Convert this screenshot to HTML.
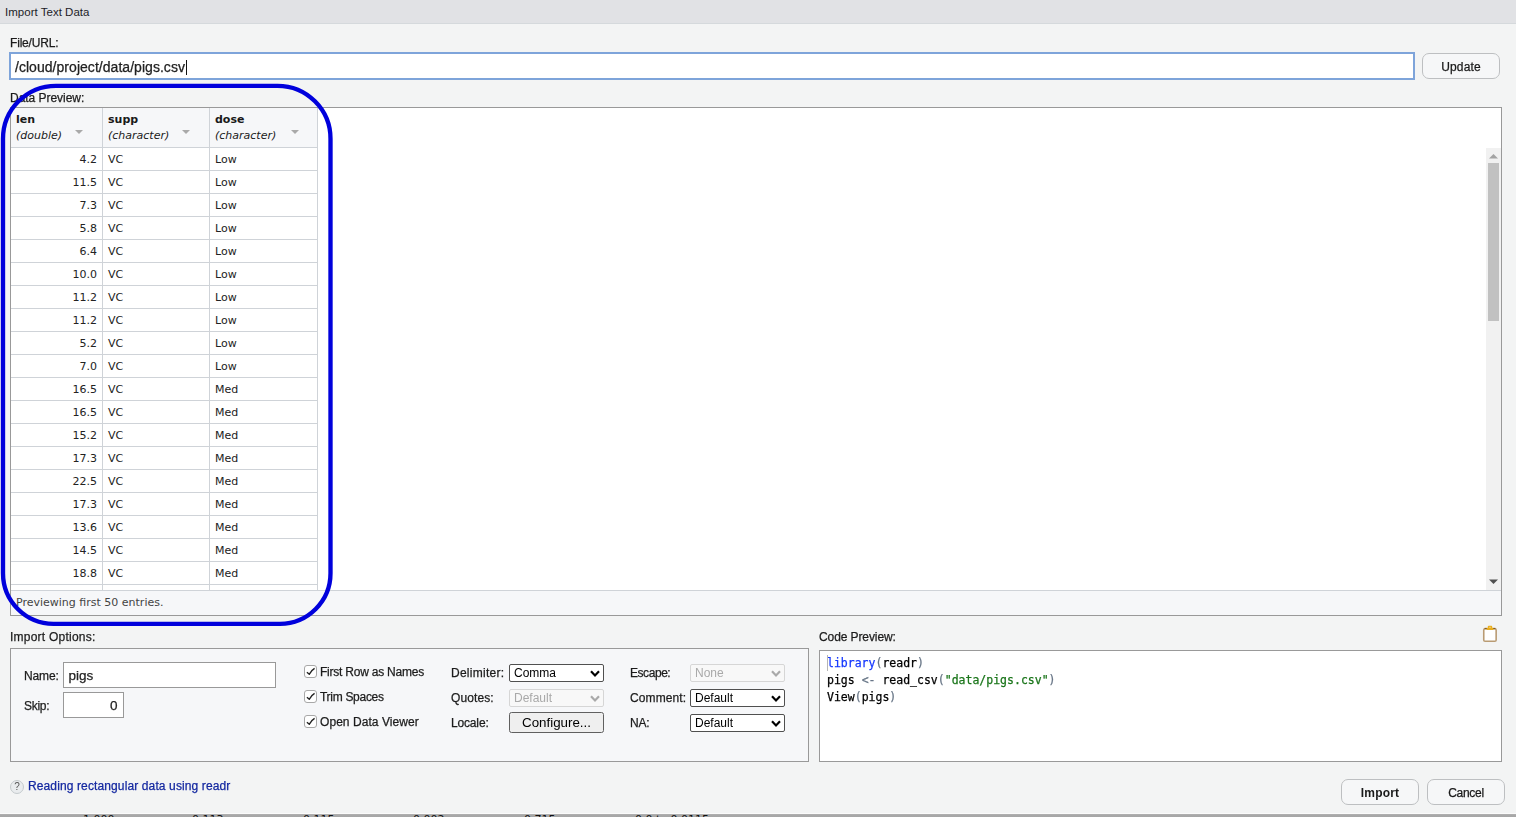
<!DOCTYPE html>
<html lang="en"><head><meta charset="utf-8"><title>Import Text Data</title>
<style>
*{box-sizing:border-box;margin:0;padding:0}
html,body{width:1516px;height:817px;overflow:hidden}
body{background:#f3f4f4;font-family:"Liberation Sans",sans-serif;font-size:12px;color:#1a1a1a;position:relative}
.abs{position:absolute}
.lbl{position:absolute;white-space:nowrap;line-height:14px;height:14px;font-size:12px;color:#1c1c1c;margin-left:-0.5px}
#title{left:0;top:0;width:1516px;height:24px;background:#e1e2e5;border-bottom:1px solid #d5d9dc}
#title span{position:absolute;left:5px;top:5px;font-size:11.5px;line-height:14px;color:#1d1d28;letter-spacing:0.02px}
#file{left:9px;top:52px;width:1406px;height:28px;background:#fff;border:2px solid #7ea4da;border-radius:0;font-size:14px;line-height:24px;padding:1px 0 0 4px;color:#222;white-space:nowrap;letter-spacing:0.04px}
#caret{position:absolute;left:174.6px;top:5.5px;width:1px;height:15px;background:#111}
.btn{position:absolute;height:26px;border:1px solid #bdbfc1;border-radius:7px;background:#f6f7f8;text-align:center;font-size:12px;line-height:24px;padding-top:1px;color:#1a1a1a}
#preview{left:10px;top:107px;width:1492px;height:509px;border:1px solid #999;background:#fff}
#grid{position:absolute;left:0;top:0;width:307px;height:482px;overflow:hidden}
table{border-collapse:separate;border-spacing:0;font-family:"DejaVu Sans",sans-serif;font-size:11px;table-layout:fixed;width:307px}
th{background:#f6f7f9;height:40px;text-align:left;vertical-align:top;padding:4px 0 0 5px;border-right:1px solid #cfd3d8;border-bottom:1px solid #cfd3d8;font-weight:bold;line-height:16px;color:#1a1a1a;position:relative}
th i{font-weight:normal;font-style:italic;display:block}
th b.tri{position:absolute;width:0;height:0;border-left:4px solid transparent;border-right:4px solid transparent;border-top:4px solid #a9a9a9;top:22px}
td{height:23px;border-right:1px solid #cfd3d8;border-bottom:1px solid #cfd3d8;padding:1px 0 0 5px;line-height:21px;color:#222;background:#fff}
td.n{text-align:right;padding:1px 5px 0 0}
#foot{position:absolute;left:0;top:482px;width:1490px;height:25px;background:#f6f7f9;border-top:1px solid #cfd3d8;font-family:"DejaVu Sans",sans-serif;font-size:11px;line-height:24px;padding-left:5px;color:#444}
#sb{position:absolute;left:1475px;top:40px;width:15px;height:442px;background:#f1f1f1}
#thumb{position:absolute;left:2px;top:15px;width:11px;height:158px;background:#c1c1c1}
.box{position:absolute;border:1px solid #999;background:#f6f7f9}
.inp{position:absolute;border:1px solid #999;background:#fff;height:26px;font-size:13.5px;line-height:24px;padding-top:1px;color:#222}
.cb{position:absolute;width:13px;height:13px;border:1px solid #a8a8a8;border-radius:3px;background:#fff}
.cb svg{position:absolute;left:0;top:0}
.sel{position:absolute;width:95px;height:18px;border:1px solid #505050;border-radius:2px;background:#fff;font-family:"Liberation Sans",sans-serif;font-size:12px;line-height:16px;padding-left:4px;color:#000}
.sel.dis{border-color:#d6d6d6;color:#a9a9a9;background:#f8f8f8}
.sel svg{position:absolute;right:3px;top:5px}
#cfg{position:absolute;left:509px;top:712px;width:95px;height:21px;border:1px solid #606060;border-radius:2.5px;background:#efefef;font-size:13.33px;line-height:19px;text-align:center;color:#000}
#code{left:819px;top:650px;width:683px;height:112px;border:1px solid #999;background:#fff;font-family:"DejaVu Sans Mono","Liberation Mono",monospace;font-size:11.5px;line-height:17px;padding:4px 0 0 7px;white-space:pre;color:#000}
#code .k{color:#1538ff} #code .p{color:#687687} #code .s{color:#1a751a}
#ccur{position:absolute;left:7px;top:4px;width:1px;height:16px;background:#b5b5b5}
#help{left:10px;top:780px;width:14px;height:14px;border:1px solid #c3c9cc;border-radius:50%;background:#e9ecee;color:#555;font-size:10px;line-height:12px;text-align:center}

.lbl,.btn,#file,.inp,.sel,#cfg,#code,#help{will-change:transform}
.lbl,.btn,#file,.inp,#code{-webkit-text-stroke-width:0.25px}
#strip{left:0;top:813px;width:1516px;height:4px;overflow:hidden;background:linear-gradient(#fbfbfb,#fbfbfb 1px,#b4b4b4 1px,#a8a8a8 2px,#a6a6a6);font-family:"DejaVu Sans",sans-serif;font-size:11px;line-height:11px;color:#111}
#strip span{position:absolute;top:1px;white-space:nowrap}
</style></head><body>
<div id="title" class="abs"><span>Import Text Data</span></div>
<div class="lbl" style="left:10px;top:36px;letter-spacing:-0.185px;">File/URL:</div>
<div id="file" class="abs">/cloud/project/data/pigs.csv<span id="caret"></span></div>
<div class="btn" style="left:1422px;top:53px;width:78px;letter-spacing:0.171px">Update</div>
<div class="lbl" style="left:10px;top:91px;letter-spacing:-0.033px;">Data Preview:</div>
<div id="preview" class="abs">
<div id="grid"><table>
<colgroup><col style="width:92px"><col style="width:107px"><col style="width:108px"></colgroup>
<tr><th>len<i>(double)</i><b class="tri" style="left:64px"></b></th><th>supp<i>(character)</i><b class="tri" style="left:79px"></b></th><th>dose<i>(character)</i><b class="tri" style="left:81px"></b></th></tr>
<tr><td class="n">4.2</td><td>VC</td><td>Low</td></tr>
<tr><td class="n">11.5</td><td>VC</td><td>Low</td></tr>
<tr><td class="n">7.3</td><td>VC</td><td>Low</td></tr>
<tr><td class="n">5.8</td><td>VC</td><td>Low</td></tr>
<tr><td class="n">6.4</td><td>VC</td><td>Low</td></tr>
<tr><td class="n">10.0</td><td>VC</td><td>Low</td></tr>
<tr><td class="n">11.2</td><td>VC</td><td>Low</td></tr>
<tr><td class="n">11.2</td><td>VC</td><td>Low</td></tr>
<tr><td class="n">5.2</td><td>VC</td><td>Low</td></tr>
<tr><td class="n">7.0</td><td>VC</td><td>Low</td></tr>
<tr><td class="n">16.5</td><td>VC</td><td>Med</td></tr>
<tr><td class="n">16.5</td><td>VC</td><td>Med</td></tr>
<tr><td class="n">15.2</td><td>VC</td><td>Med</td></tr>
<tr><td class="n">17.3</td><td>VC</td><td>Med</td></tr>
<tr><td class="n">22.5</td><td>VC</td><td>Med</td></tr>
<tr><td class="n">17.3</td><td>VC</td><td>Med</td></tr>
<tr><td class="n">13.6</td><td>VC</td><td>Med</td></tr>
<tr><td class="n">14.5</td><td>VC</td><td>Med</td></tr>
<tr><td class="n">18.8</td><td>VC</td><td>Med</td></tr>
<tr><td class="n">15.5</td><td>VC</td><td>Med</td></tr>
</table></div>
<div id="sb"><div id="thumb"></div>
<svg class="abs" style="left:3px;top:4.5px" width="9" height="6"><path d="M0 5.5 L4.5 1 L9 5.5Z" fill="#a3a3a3"/></svg>
<svg class="abs" style="left:3px;top:431px" width="9" height="6"><path d="M0 0.5 L9 0.5 L4.5 5Z" fill="#505050"/></svg>
</div>
<div id="foot">Previewing first 50 entries.</div>
</div>

<div class="lbl" style="left:10px;top:630px;letter-spacing:0.23px;">Import Options:</div>
<div class="box" style="left:10px;top:648px;width:799px;height:114px"></div>
<div class="lbl" style="left:24px;top:669px;letter-spacing:-0.135px;">Name:</div>
<div class="inp" style="left:63px;top:662px;width:213px;padding-left:4.5px">pigs</div>
<div class="lbl" style="left:24px;top:699px;letter-spacing:-0.288px;">Skip:</div>
<div class="inp" style="left:63px;top:692px;width:61px;text-align:right;padding-right:5.5px">0</div>

<div class="cb" style="left:304px;top:665px"><svg width="11" height="11" viewBox="0 0 11 11"><path d="M1.9 6.3 L4.3 8.2 Q6.3 4.2 9.6 2.3" fill="none" stroke="#222" stroke-width="1.45" stroke-linejoin="round"/></svg></div><div class="lbl" style="left:320px;top:665px;letter-spacing:-0.222px;">First Row as Names</div>
<div class="cb" style="left:304px;top:690px"><svg width="11" height="11" viewBox="0 0 11 11"><path d="M1.9 6.3 L4.3 8.2 Q6.3 4.2 9.6 2.3" fill="none" stroke="#222" stroke-width="1.45" stroke-linejoin="round"/></svg></div><div class="lbl" style="left:320px;top:690px;letter-spacing:-0.293px;">Trim Spaces</div>
<div class="cb" style="left:304px;top:715px"><svg width="11" height="11" viewBox="0 0 11 11"><path d="M1.9 6.3 L4.3 8.2 Q6.3 4.2 9.6 2.3" fill="none" stroke="#222" stroke-width="1.45" stroke-linejoin="round"/></svg></div><div class="lbl" style="left:320px;top:715px;letter-spacing:0.062px;">Open Data Viewer</div>

<div class="lbl" style="left:451px;top:666px;letter-spacing:0.26px;">Delimiter:</div><div class="sel" style="left:509px;top:664px">Comma<svg width="10" height="7" viewBox="0 0 10 7"><path d="M1 1.2 L5 5.4 L9 1.2" fill="none" stroke="currentColor" stroke-width="2.2"/></svg></div>
<div class="lbl" style="left:451px;top:691px;letter-spacing:0.091px;">Quotes:</div><div class="sel dis" style="left:509px;top:689px">Default<svg width="10" height="7" viewBox="0 0 10 7"><path d="M1 1.2 L5 5.4 L9 1.2" fill="none" stroke="currentColor" stroke-width="2.2"/></svg></div>
<div class="lbl" style="left:451px;top:716px;letter-spacing:-0.162px;">Locale:</div><div id="cfg">Configure...</div>

<div class="lbl" style="left:630px;top:666px;letter-spacing:-0.444px;">Escape:</div><div class="sel dis" style="left:690px;top:664px">None<svg width="10" height="7" viewBox="0 0 10 7"><path d="M1 1.2 L5 5.4 L9 1.2" fill="none" stroke="currentColor" stroke-width="2.2"/></svg></div>
<div class="lbl" style="left:630px;top:691px;letter-spacing:0.111px;">Comment:</div><div class="sel" style="left:690px;top:689px">Default<svg width="10" height="7" viewBox="0 0 10 7"><path d="M1 1.2 L5 5.4 L9 1.2" fill="none" stroke="currentColor" stroke-width="2.2"/></svg></div>
<div class="lbl" style="left:630px;top:716px;letter-spacing:-0.16px;">NA:</div><div class="sel" style="left:690px;top:714px">Default<svg width="10" height="7" viewBox="0 0 10 7"><path d="M1 1.2 L5 5.4 L9 1.2" fill="none" stroke="currentColor" stroke-width="2.2"/></svg></div>

<div class="lbl" style="left:819px;top:630px;letter-spacing:-0.097px;">Code Preview:</div>
<div id="code" class="abs"><span id="ccur"></span><span class="k">library</span><span class="p">(</span>readr<span class="p">)</span>
pigs <span class="p">&lt;-</span> read_csv<span class="p">(</span><span class="s">"data/pigs.csv"</span><span class="p">)</span>
View<span class="p">(</span>pigs<span class="p">)</span></div>

<div id="help" class="abs">?</div>
<div class="lbl" style="left:28.8px;top:779px;letter-spacing:0.12px;color:#1428a0;">Reading rectangular data using readr</div>
<div class="btn" style="left:1341px;top:779px;width:78px;font-weight:bold;-webkit-text-stroke-width:0;letter-spacing:0.19px">Import</div>
<div class="btn" style="left:1427px;top:779px;width:78px;letter-spacing:-0.276px">Cancel</div>
<svg class="abs" style="left:1482px;top:624px" width="16" height="19" viewBox="0 0 16 19"><rect x="1.75" y="4.7" width="12.4" height="12.5" rx="1.3" fill="#fff" stroke="#b99b73" stroke-width="1.6"/><path d="M2.6 4.5 H13.4" stroke="#8b5c16" stroke-width="1.3"/><rect x="5.8" y="1.8" width="4.4" height="3.4" rx="0.9" fill="#e9ae1e"/><rect x="4.7" y="4" width="6.6" height="2.1" rx="0.6" fill="#e9ae1e"/><rect x="7.1" y="2.9" width="1.8" height="0.9" fill="#f1d081"/></svg>
<div id="strip" class="abs"><span style="left:83px">1.000</span><span style="left:192px">0.113</span><span style="left:303px">0.115</span><span style="left:413px">0.002</span><span style="left:524px">0.715</span><span style="left:635px">0.0 to 0.0115</span></div>
<svg class="abs" style="left:0;top:0;pointer-events:none" width="1516" height="817"><path d="M56.0 85.8 H277.5 A53 53 0 0 1 330.5 138.8 V573.3 A50.5 50.5 0 0 1 280.0 623.8 H53.5 A50.5 50.5 0 0 1 3.0 573.3 V138.8 A53 53 0 0 1 56.0 85.8 Z" fill="none" stroke="#0000dc" stroke-width="4.35"/></svg>
</body></html>
